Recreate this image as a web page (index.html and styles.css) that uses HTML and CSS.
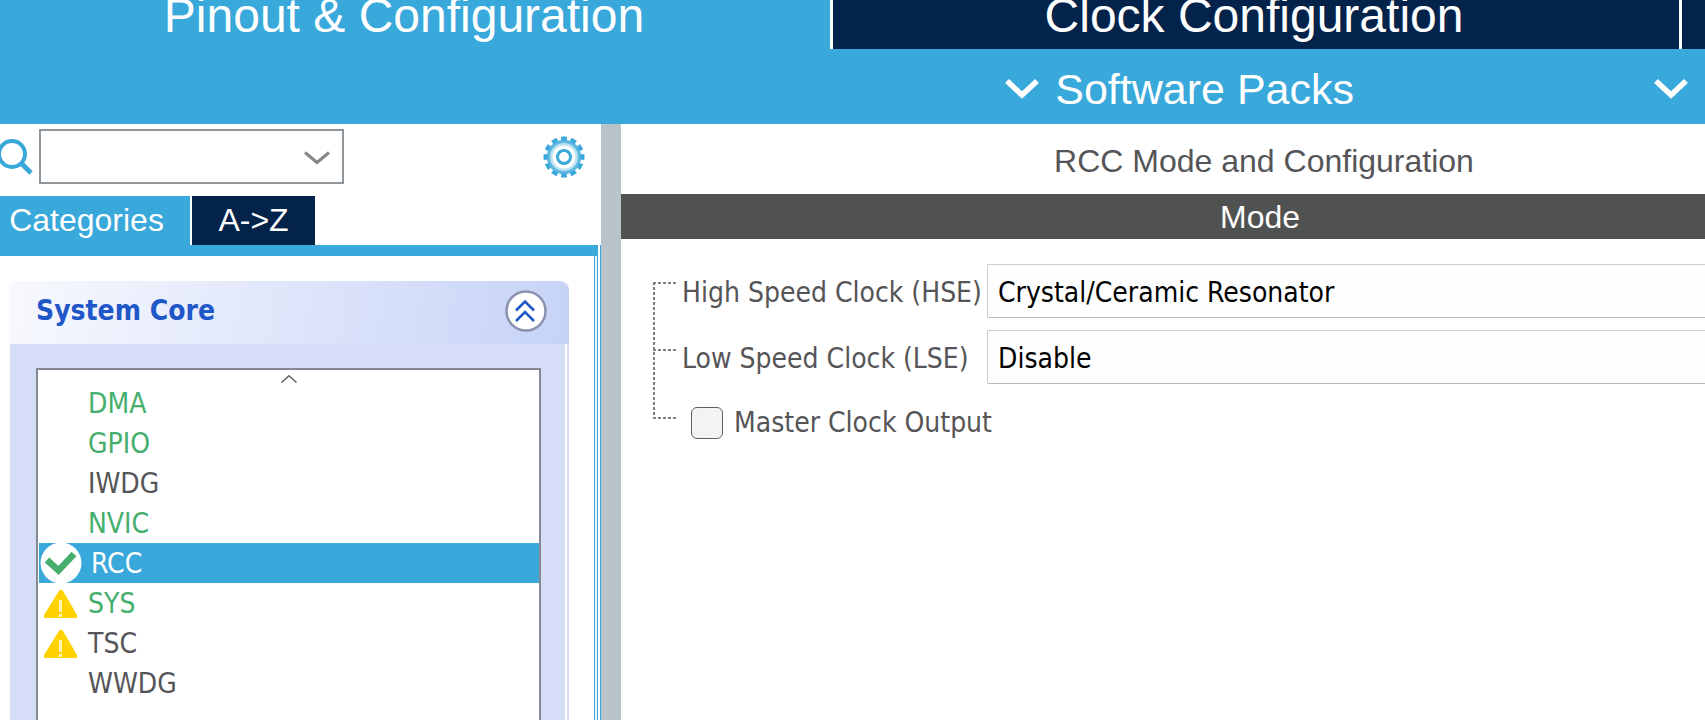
FILE: index.html
```
<!DOCTYPE html>
<html lang="en">
<head>
<meta charset="utf-8">
<title>Pinout &amp; Configuration</title>
<link rel="stylesheet" href="styles.css">
</head>
<body>
<div class="app">
  <header class="top">
    <nav class="views">
      <button class="view view-active" type="button">Pinout &amp; Configuration</button>
      <button class="view view-clock" type="button">Clock Configuration</button>
      <button class="view view-next" type="button" aria-label="Next view"></button>
    </nav>
    <div class="menus">
      <button class="menu" type="button">
        <svg class="menu-arrow" viewBox="0 0 34 20"><path d="M2 2 17 16 32 2" fill="none" stroke="#fff" stroke-width="5.500"/></svg>
        Software Packs
      </button>
      <button class="menu" type="button" aria-label="Pinout menu">
        <svg class="menu-arrow" viewBox="0 0 34 20"><path d="M2 2 17 16 32 2" fill="none" stroke="#fff" stroke-width="5.500"/></svg>
      </button>
    </div>
  </header>

  <main class="work">
    <aside class="side">
      <div class="finder">
        <svg class="lens" viewBox="0 0 33 36"><g fill="none" stroke="#39a8db"><circle cx="12" cy="15" r="13" stroke-width="4"/><path d="M21 24 31 34" stroke-width="5"/></g></svg>
        <div class="combo">
          <input class="combo-text" type="text" aria-label="Search peripherals">
          <button class="combo-open" type="button" aria-label="Show recent searches">
            <svg class="combo-arrow" viewBox="0 0 26 14"><path d="M1 1.500 13 11.500 25 1.500" fill="none" stroke="#858585" stroke-width="3"/></svg>
          </button>
        </div>
        <button class="gear" type="button" aria-label="Settings">
          <svg class="gear-icon" viewBox="0 0 42 42"><g fill="none" stroke="#39a8db">
            <circle cx="21" cy="21" r="18.500" stroke-width="4" pathLength="24" stroke-dasharray="1.200 .800" stroke-dashoffset=".600"/>
            <circle cx="21" cy="21" r="15.500" stroke-width="3.500" stroke-opacity=".800"/>
            <circle cx="21" cy="21" r="12.500" stroke-width="2" stroke-opacity=".350"/>
            <circle cx="21" cy="21" r="6.500" stroke-width="3"/></g></svg>
        </button>
      </div>
      <div class="tabs">
        <button class="tab tab-active" type="button">Categories</button>
        <button class="tab tab-az" type="button">A-&gt;Z</button>
      </div>
      <div class="pane">
        <section class="group">
          <div class="group-head">
            <h2 class="group-title">System Core</h2>
            <button class="fold" type="button" aria-label="Collapse System Core">
              <svg class="fold-icon" viewBox="0 0 42 42"><circle cx="21" cy="21" r="19.500" fill="#fff" stroke="#8b92b0" stroke-width="2.500"/><path d="M11 20.500 20 11.500 29 20.500M11 31 20 22 29 31" fill="none" stroke="#1f56c8" stroke-width="2.600"/></svg>
            </button>
          </div>
          <div class="group-body">
            <div class="list">
              <svg class="list-up" viewBox="0 0 16 8"><path d="M.500 7.500 8 .800 15.500 7.500" fill="none" stroke="#606060" stroke-width="1.500"/></svg>
              <ul class="items">
                <li class="item on"><span class="mark"></span>DMA</li>
                <li class="item on"><span class="mark"></span>GPIO</li>
                <li class="item"><span class="mark"></span>IWDG</li>
                <li class="item on"><span class="mark"></span>NVIC</li>
                <li class="item chosen"><svg class="mark mark-ok" viewBox="0 0 42 40"><circle cx="21" cy="20" r="20.500" fill="#fff"/><path d="M7 17 18.500 27.500 34 11" fill="none" stroke="#45ae6c" stroke-width="6.500"/></svg>RCC</li>
                <li class="item on"><svg class="mark" viewBox="0 0 42 40"><path d="M19.500 7H22.500L37 32V35H4V32Z" fill="#ffd200"/><path d="M20.500 17V29M20.500 31V34" stroke="#fff3b8" stroke-width="3"/></svg>SYS</li>
                <li class="item"><svg class="mark" viewBox="0 0 42 40"><path d="M19.500 7H22.500L37 32V35H4V32Z" fill="#ffd200"/><path d="M20.500 17V29M20.500 31V34" stroke="#fff3b8" stroke-width="3"/></svg>TSC</li>
                <li class="item"><span class="mark"></span>WWDG</li>
              </ul>
            </div>
          </div>
        </section>
      </div>
    </aside>

    <div class="splitter"></div>

    <section class="detail">
      <h1 class="detail-title">RCC Mode and Configuration</h1>
      <h2 class="detail-bar">Mode</h2>
      <form class="modes">
        <svg class="tree" viewBox="0 0 24 137"><path d="M0 1H24M1 0V137M0 68H24M0 136H24" fill="none" stroke="#808080" stroke-width="2" stroke-dasharray="3 2"/></svg>
        <label class="label" for="hse">High Speed Clock (HSE)</label>
        <select class="choice" id="hse"><option>Crystal/Ceramic Resonator</option><option>Disable</option></select>
        <label class="label" for="lse">Low Speed Clock (LSE)</label>
        <select class="choice" id="lse"><option>Disable</option><option>Crystal/Ceramic Resonator</option></select>
        <div class="check">
          <input class="box" type="checkbox" id="mco">
          <label for="mco">Master Clock Output</label>
        </div>
      </form>
    </section>
  </main>
</div>
</body>
</html>
```
FILE: styles.css
```
* {
  box-sizing: border-box;
}

body {
  margin: 0;
  overflow: hidden;
  background: #fff;
  color: #555557;
  font: 28px/40px "DejaVu Sans Condensed", "DejaVu Sans", sans-serif;
}

button, input, select {
  margin: 0;
  padding: 0;
  border: 0;
  background: none;
  color: inherit;
  font: inherit;
}

h1, h2, ul {
  margin: 0;
  padding: 0;
}

svg {
  display: block;
  flex: none;
}

.app {
  display: flex;
  flex-direction: column;
  height: 100vh;
}

/* Header */
.top {
  flex: none;
  background: #39a8db;
  color: #fff;
  font-family: "Liberation Sans", Arial, sans-serif;
}

.views {
  display: grid;
  grid-template-columns: 830fr 849fr 26fr;
}

.view {
  height: 49px;
  padding-bottom: 18px;
  background: #03234b;
  font-size: 48px;
  line-height: 31px;
  white-space: nowrap;
}

.view-active {
  padding-right: 22px;
  background: #39a8db;
}

.view-clock {
  padding-right: 4px;
  border-left: 3px solid #fff;
}

.view-next {
  border-left: 3px solid #fff;
}

.menus {
  display: flex;
  justify-content: flex-end;
  gap: 300px;
  height: 75px;
  padding: 4px 17px 0 0;
}

.menu {
  display: flex;
  align-items: center;
  gap: 16px;
  font-size: 43px;
  line-height: 48px;
}

.menu-arrow {
  width: 34px;
  height: 20px;
}

/* Left side */
.work {
  display: flex;
  flex: 1;
  min-height: 0;
}

.side {
  display: flex;
  flex: none;
  flex-direction: column;
  width: 601px;
}

.finder {
  display: flex;
  align-items: center;
  flex: none;
  height: 72px;
  padding: 0 16px 7px 0;
}

.lens {
  width: 33px;
  height: 36px;
  margin-right: 6px;
}

.combo {
  display: flex;
  align-items: center;
  width: 305px;
  height: 55px;
  border: 2px solid #8f969c;
}

.combo-text {
  flex: 1;
  min-width: 0;
  height: 100%;
  padding: 0 8px;
  outline: 0;
}

.combo-open {
  padding: 2px 12px 0;
}

.combo-arrow {
  width: 26px;
  height: 14px;
}

.gear {
  margin-left: auto;
}

.gear-icon {
  width: 42px;
  height: 42px;
}

.tabs {
  display: flex;
  flex: none;
  gap: 2px;
  color: #fff;
  font: 32px/49px "Liberation Sans", Arial, sans-serif;
}

.tab {
  height: 49px;
}

.tab-active {
  width: 190px;
  padding-right: 17px;
  background: #39a8db;
}

.tab-az {
  width: 123px;
  background: #03234b;
}

.pane {
  flex: 1;
  min-height: 0;
  padding: 36px 26px 0 9px;
  background:
    linear-gradient(#39a8db, #39a8db) 0 0 / calc(100% - 4px) 11px no-repeat,
    linear-gradient(to left, #39a8db 1px, #fff 1px, #fff 3px, #39a8db 3px, #39a8db 4px, #eef3f5 4px, #eef3f5 6px, #39a8db 6px, #39a8db 7px, #fff 7px);
}

.group {
  display: flex;
  flex-direction: column;
  height: 100%;
  margin-right: 6px;
}

.group-head {
  display: flex;
  align-items: center;
  justify-content: space-between;
  flex: none;
  height: 63px;
  padding: 0 22px 3px 27px;
  border-radius: 9px 9px 0 0;
  background: linear-gradient(100deg, #f8f9fe, #c6d3f7);
}

.group-title {
  color: #1f56c8;
  font-size: 28px;
  font-weight: bold;
}

.fold-icon {
  width: 42px;
  height: 42px;
}

.group-body {
  flex: 1;
  min-height: 0;
  margin-left: 1px;
  padding: 24px 26px 0 26px;
  border-right: 2px solid #d6ddf7;
  background: linear-gradient(to left, #fff 2px, #d6ddf7 2px);
}

.list {
  height: 100%;
  padding-top: 5px;
  overflow: hidden;
  border: 2px solid #848a93;
  border-bottom: 0;
  background: #fff;
}

.list-up {
  width: 16px;
  height: 8px;
  margin: 0 auto;
}

.items {
  list-style: none;
}

.item {
  display: flex;
  gap: 6px;
  height: 40px;
  margin-left: 1px;
  padding-left: 1px;
  line-height: 42px;
}

.on {
  color: #45ae6c;
}

.chosen {
  gap: 9px;
  background: #39a8db;
  color: #fff;
}

.mark {
  flex: none;
  width: 42px;
  height: 40px;
}

.splitter {
  flex: none;
  width: 20px;
  background: #b9c4ca;
}

/* Right side */
.detail {
  flex: 1;
  min-width: 0;
}

.detail-title, .detail-bar {
  font: 32px/45px "Liberation Sans", Arial, sans-serif;
  text-align: center;
}

.detail-title {
  padding: 15px 0 10px 202px;
}

.detail-bar {
  padding-left: 194px;
  background: #505251;
  color: #fff;
  line-height: 47px;
  height: 45px;
}

.modes {
  display: grid;
  grid-template-columns: 24px 302px 1fr;
  grid-auto-rows: 54px;
  row-gap: 12px;
  column-gap: 4px;
  align-items: center;
  padding: 25px 0 0 32px;
}

.tree {
  grid-row: 1 / span 3;
  align-self: start;
  width: 24px;
  height: 137px;
  margin-top: 18px;
}

.label {
  padding: 3px 0 0 1px;
  white-space: nowrap;
}

.choice {
  width: 100%;
  height: 54px;
  padding: 3px 0 0 10px;
  border: 1px solid #ccc;
  border-right: 0;
  border-bottom-color: #b8b8b8;
  border-radius: 2px 0 0 2px;
  background: #fefefe;
  color: #000;
  appearance: none;
}

.check {
  display: flex;
  grid-column: 2 / -1;
  align-items: center;
  gap: 11px;
  padding-left: 10px;
}

.box {
  width: 32px;
  height: 32px;
  border: 1px solid #606060;
  border-radius: 6px;
  background: #f3f3f3;
  appearance: none;
}
```
